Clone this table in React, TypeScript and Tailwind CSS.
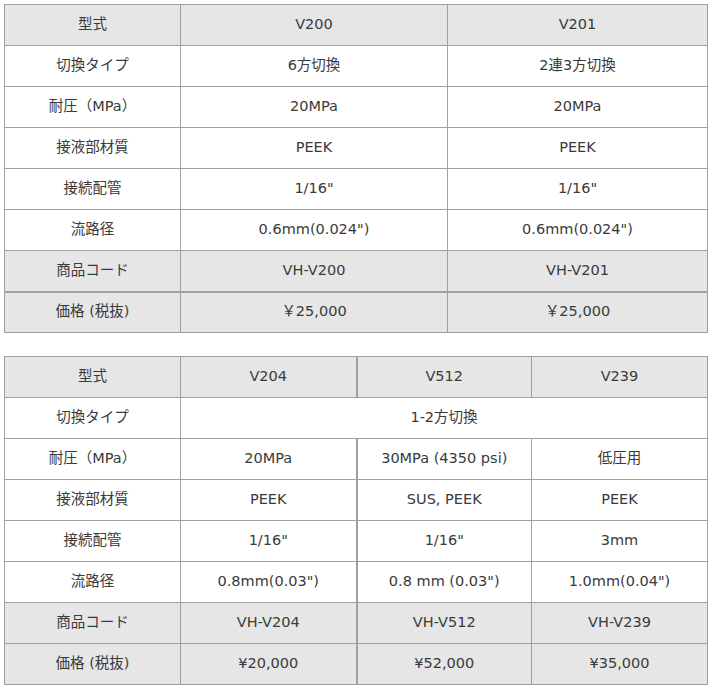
const FONT = "font-['DejaVu_Sans','Noto_Sans_CJK_JP',sans-serif]";

const table1 = [
  { label: "型式", cells: ["V200", "V201"], gray: true },
  { label: "切換タイプ", cells: ["6方切換", "2連3方切換"] },
  { label: "耐圧（MPa）", cells: ["20MPa", "20MPa"] },
  { label: "接液部材質", cells: ["PEEK", "PEEK"] },
  { label: "接続配管", cells: ["1/16\"", "1/16\""] },
  { label: "流路径", cells: ["0.6mm(0.024\")", "0.6mm(0.024\")"] },
  { label: "商品コード", cells: ["VH-V200", "VH-V201"], gray: true },
  { label: "価格 (税抜)", cells: ["￥25,000", "￥25,000"], gray: true, thickTop: true },
];

const table2 = [
  { label: "型式", cells: ["V204", "V512", "V239"], gray: true },
  { label: "切換タイプ", cells: ["1-2方切換"], span: true },
  { label: "耐圧（MPa）", cells: ["20MPa", "30MPa (4350 psi)", "低圧用"] },
  { label: "接液部材質", cells: ["PEEK", "SUS, PEEK", "PEEK"] },
  { label: "接続配管", cells: ["1/16\"", "1/16\"", "3mm"] },
  { label: "流路径", cells: ["0.8mm(0.03\")", "0.8 mm (0.03\")", "1.0mm(0.04\")"] },
  { label: "商品コード", cells: ["VH-V204", "VH-V512", "VH-V239"], gray: true },
  { label: "価格 (税抜)", cells: ["¥20,000", "¥52,000", "¥35,000"], gray: true },
];

type Row = { label: string; cells: string[]; gray?: boolean; span?: boolean; thickTop?: boolean };

const cell = "border border-[#a0a0a0] h-[41px] p-0 text-center align-middle";

const SpecTable = ({ rows, widths, thickCol }: { rows: Row[]; widths: number[]; thickCol?: number }) => (
  <table className="border-collapse table-fixed w-[703px] text-[14.5px] text-[#3a3a3a]">
    <colgroup>
      {widths.map((w, i) => (
        <col key={i} style={{ width: w }} />
      ))}
    </colgroup>
    <tbody>
      {rows.map((r) => (
        <tr key={r.label} className={r.gray ? "bg-[#e6e6e6]" : "bg-white"}>
          <td className={`${cell} ${r.thickTop ? "border-t-2" : ""}`}>{r.label}</td>
          {r.span ? (
            <td colSpan={widths.length - 1} className={cell}>
              {r.cells[0]}
            </td>
          ) : (
            r.cells.map((c, i) => (
              <td
                key={i}
                className={`${cell} ${r.thickTop ? "border-t-2" : ""} ${thickCol === i + 1 ? "border-l-2" : ""}`}
              >
                {c}
              </td>
            ))
          )}
        </tr>
      ))}
    </tbody>
  </table>
);

export default function App() {
  return (
    <div className={`${FONT} bg-white w-[713px] h-[690px] pt-[4px] pl-[4px] flex flex-col gap-[23px]`}>
      <SpecTable rows={table1} widths={[176, 267, 260]} />
      <SpecTable rows={table2} widths={[176, 176, 175, 176]} thickCol={2} />
    </div>
  );
}
